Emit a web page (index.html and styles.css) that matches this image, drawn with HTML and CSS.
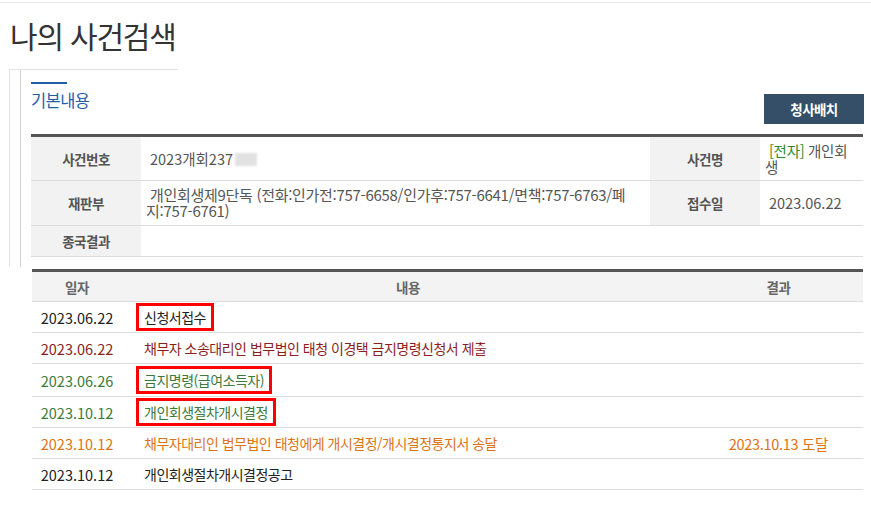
FILE: index.html
```html
<!DOCTYPE html>
<html lang="ko">
<head>
<meta charset="utf-8">
<title>나의 사건검색</title>
<link rel="stylesheet" href="styles.css">
</head>
<body>
<div class="topline"></div>
<h1 class="title">나의 사건검색</h1>

<div class="panel">
  <div class="panel-topline"></div>
  <div class="panel-inner">
    <div class="section-head">
      <div class="sec-title">
        <div class="bar"></div>
        <h2 class="sec-name">기본내용</h2>
      </div>
      <button class="btn">청사배치</button>
    </div>

    <table class="info">
      <colgroup>
        <col class="c-lab"><col class="c-val"><col class="c-lab"><col class="c-val2">
      </colgroup>
      <tr class="r-tall">
        <th>사건번호</th>
        <td class="val num">2023개회237<span class="blur"></span></td>
        <th>사건명</th>
        <td class="val"><span class="tag">[전자]</span> 개인회<br>생</td>
      </tr>
      <tr class="r-tall">
        <th>재판부</th>
        <td class="val wide">개인회생제9단독 (전화:인가전:757-6658/인가후:757-6641/면책:757-6763/폐<br>지:757-6761)</td>
        <th>접수일</th>
        <td class="val num">2023.06.22</td>
      </tr>
      <tr class="r-short">
        <th>종국결과</th>
        <td class="val" colspan="3"></td>
      </tr>
    </table>
  </div>
</div>

<table class="hist">
  <colgroup>
    <col class="h-date"><col class="h-cont"><col class="h-res">
  </colgroup>
  <thead>
    <tr><th>일자</th><th>내용</th><th>결과</th></tr>
  </thead>
  <tbody>
    <tr class="k-black">
      <td class="date">2023.06.22</td>
      <td class="cont"><span class="mark">신청서접수</span></td>
      <td class="res"></td>
    </tr>
    <tr class="k-red">
      <td class="date">2023.06.22</td>
      <td class="cont">채무자 소송대리인 법무법인 태청 이경택 금지명령신청서 제출</td>
      <td class="res"></td>
    </tr>
    <tr class="k-green tall">
      <td class="date">2023.06.26</td>
      <td class="cont"><span class="mark">금지명령(급여소득자)</span></td>
      <td class="res"></td>
    </tr>
    <tr class="k-green">
      <td class="date">2023.10.12</td>
      <td class="cont"><span class="mark">개인회생절차개시결정</span></td>
      <td class="res"></td>
    </tr>
    <tr class="k-orange">
      <td class="date">2023.10.12</td>
      <td class="cont">채무자대리인 법무법인 태청에게 개시결정/개시결정통지서 송달</td>
      <td class="res">2023.10.13 도달</td>
    </tr>
    <tr class="k-black">
      <td class="date">2023.10.12</td>
      <td class="cont">개인회생절차개시결정공고</td>
      <td class="res"></td>
    </tr>
  </tbody>
</table>
</body>
</html>
```

FILE: styles.css
```css
* { box-sizing: border-box; }

body {
  margin: 0;
  background: #fff;
  font-family: "Noto Sans CJK KR", "Noto Sans", sans-serif;
  color: #222;
}

.topline {
  margin-top: 2px;
  border-top: 1px solid #e8e8e8;
}

.title {
  margin: 14px 0 0 10px;
  height: 52px;
  font-size: 30px;
  line-height: 36px;
  font-weight: 400;
  letter-spacing: -1.2px;
  color: #333;
}

.panel {
  margin-left: 9px;
  border-left: 1px solid #e2e2e2;
  width: 855px;
}

.panel-topline {
  width: 168px;
  border-top: 1px solid #e2e2e2;
}

.panel-inner {
  margin-left: 10px;
  border-left: 1px solid #d2d2d2;
  padding: 12px 0 10px 10px;
}

.section-head {
  display: flex;
  justify-content: space-between;
  align-items: flex-start;
  margin-bottom: 10px;
}

.bar {
  width: 36px;
  height: 2px;
  background: #1f5fa6;
}

.sec-name {
  margin: 7px 0 0;
  font-size: 16.5px;
  line-height: 18px;
  font-weight: 400;
  letter-spacing: -0.6px;
  color: #1f5fa6;
}

.btn {
  margin-top: 12px;
  width: 100px;
  height: 30px;
  border: 0;
  background: #344f67;
  color: #fff;
  font-family: inherit;
  font-size: 13.5px;
  font-weight: 700;
  letter-spacing: -0.6px;
  padding: 0;
}

table {
  border-collapse: collapse;
  table-layout: fixed;
}

.info {
  width: 832px;
  border-top: 3px solid #555;
}

.c-lab { width: 110px; }
.c-val { width: 509px; }
.c-val2 { width: 103px; }

.info th {
  background: #f2f2f2;
  color: #555;
  font-size: 13.5px;
  font-weight: 700;
  letter-spacing: -0.5px;
  text-align: center;
  padding: 0;
  border-bottom: 1px solid #dcdcdc;
}

.info td {
  border-bottom: 1px solid #dcdcdc;
  padding: 0 2px 0 5px;
  font-size: 14.5px;
  line-height: 16px;
  letter-spacing: -0.3px;
  color: #555;
  text-indent: 4px;
}

.info td.wide {
  font-size: 15px;
}

.info td.num {
  font-size: 14.5px;
  letter-spacing: 0;
}

.r-tall th, .r-tall td { height: 45px; }
.r-short th, .r-short td { height: 31px; }

.tag { color: #2a8a2a; }

.blur {
  display: inline-block;
  width: 22px;
  height: 13px;
  margin-left: 2px;
  vertical-align: -1px;
  background: #e2e2e2;
  filter: blur(1.2px);
}

.hist {
  margin: 2px 0 0 32px;
  width: 831px;
  border-top: 3px solid #555;
}

.h-date { width: 90px; }
.h-cont { width: 572px; }
.h-res { width: 169px; }

.hist th {
  height: 31px;
  background: #f3f3f3;
  color: #666;
  font-size: 13.5px;
  font-weight: 700;
  letter-spacing: -0.5px;
  text-align: center;
  padding: 0;
  border-bottom: 1px solid #dcdcdc;
}

.hist td {
  height: 31px;
  padding: 0;
  border-bottom: 1px solid #dcdcdc;
  font-size: 14px;
  letter-spacing: -0.5px;
}

.hist tr.tall td { height: 33px; }

.hist td.date {
  text-align: center;
  font-size: 14.5px;
  letter-spacing: 0;
}

.hist td.cont {
  padding-left: 22px;
}

.hist td.res {
  text-align: center;
  font-size: 14.5px;
  letter-spacing: -0.3px;
}

.mark {
  display: inline-block;
  line-height: 16px;
  border: 3px solid #f00;
  padding: 3px 5px;
  margin: 0 -8px;
}

.k-black { color: #222; }
.k-red { color: #8a1f1f; }
.k-green { color: #3c7a3c; }
.k-orange { color: #dc7417; }
```
